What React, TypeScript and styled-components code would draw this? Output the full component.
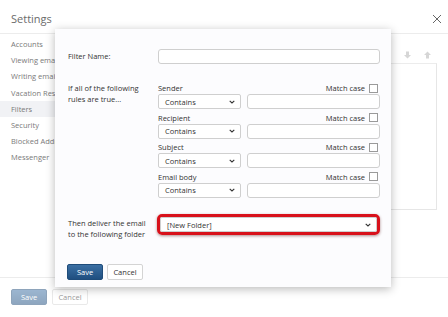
import React from 'react'
import styled, { createGlobalStyle } from 'styled-components'

const GlobalStyle = createGlobalStyle`
  html, body {
    margin: 0;
    padding: 0;
    background: #ffffff;
    font-family: "Open Sans", "Noto Sans", Arial, sans-serif;
  }
  #root {
    width: 448px;
    height: 317px;
    overflow: hidden;
  }
`

const Page = styled.div`
  position: relative;
  width: 448px;
  height: 317px;
  display: flex;
  flex-direction: column;
  background: #ffffff;
`

const Header = styled.div`
  height: 34px;
  box-sizing: border-box;
  display: flex;
  align-items: center;
  justify-content: space-between;
  padding: 4px 6px 0 11px;
  border-bottom: 1px solid #ececec;
`

const Title = styled.div`
  font-size: 11px;
  color: #6b6b6b;
`

const Body = styled.div`
  flex: 1;
  display: flex;
`

const Nav = styled.div`
  width: 90px;
  padding-top: 2px;
  display: flex;
  flex-direction: column;
`

const NavItem = styled.div<{ $active?: boolean }>`
  height: 16.2px;
  display: flex;
  align-items: center;
  padding-left: 11px;
  font-size: 7.5px;
  color: #7a7a7a;
  white-space: nowrap;
  background: ${({ $active }) => ($active ? '#f1f2f5' : 'transparent')};
`

const Pane = styled.div`
  flex: 1;
  display: flex;
  flex-direction: column;
  padding: 12px 11px 0 10px;
`

const ArrowRow = styled.div`
  height: 17px;
  display: flex;
  justify-content: flex-end;
  align-items: center;
  gap: 13px;
  padding-right: 6px;
`

const ListBox = styled.div`
  height: 145px;
  border: 1px solid #e6e6e6;
  border-top-color: #ececec;
`

const Footer = styled.div`
  height: 40px;
  box-sizing: border-box;
  border-top: 1px solid #ececec;
  display: flex;
  align-items: flex-start;
  gap: 5px;
  padding: 11px 0 0 11px;
`

const Button = styled.div<{ $primary?: boolean; $faded?: boolean }>`
  width: 36px;
  height: 16px;
  box-sizing: border-box;
  display: flex;
  align-items: center;
  justify-content: center;
  font-size: 7.5px;
  border-radius: 2px;
  border: 1px solid ${({ $primary }) => ($primary ? '#1f4c7a' : '#d4d4d4')};
  color: ${({ $primary }) => ($primary ? '#ffffff' : '#333333')};
  background: ${({ $primary }) =>
    $primary ? 'linear-gradient(#3b6fa3, #1f4f80)' : '#ffffff'};
  opacity: ${({ $faded }) => ($faded ? 0.5 : 1)};
`

const Modal = styled.div`
  position: absolute;
  left: 55px;
  top: 29px;
  width: 336px;
  height: 258px;
  box-sizing: border-box;
  background: #fcfcfe;
  box-shadow: 0 2px 9px rgba(0, 0, 0, 0.28);
  padding: 20px 11px 0 13px;
  display: grid;
  grid-template-columns: 90px 1fr;
  align-content: start;
  align-items: start;
  color: #333333;
`

const Label = styled.div<{ $top?: number }>`
  margin-top: ${({ $top }) => $top ?? 0}px;
  font-size: 7.5px;
  line-height: 10.5px;
`

const Field = styled.div<{ $top?: number }>`
  margin-top: ${({ $top }) => $top ?? 0}px;
  display: flex;
  flex-direction: column;
`

const TextInput = styled.div<{ $grow?: boolean }>`
  height: 15px;
  box-sizing: border-box;
  border: 1px solid #cfcfcf;
  border-radius: 3px;
  background: #ffffff;
  flex: ${({ $grow }) => ($grow ? 1 : 'none')};
`

const RuleHead = styled.div`
  height: 12px;
  display: flex;
  align-items: center;
  justify-content: space-between;
  font-size: 7.5px;
`

const MatchCase = styled.div`
  display: flex;
  align-items: center;
  gap: 4px;
  padding-right: 2px;
`

const CheckBox = styled.div`
  width: 7px;
  height: 7px;
  border: 1px solid #9a9a9a;
  background: #ffffff;
`

const RuleRow = styled.div`
  display: flex;
  gap: 6px;
  margin-bottom: 2.5px;
`

const Select = styled.div<{ $width?: number }>`
  width: ${({ $width }) => ($width ? `${$width}px` : 'auto')};
  flex: ${({ $width }) => ($width ? 'none' : 1)};
  height: 15px;
  box-sizing: border-box;
  border: 1px solid #cfcfcf;
  border-radius: 2px;
  background: #ffffff;
  display: flex;
  align-items: center;
  justify-content: space-between;
  padding: 0 5px 0 6px;
  font-size: 7.5px;
`

const Highlight = styled.div`
  border: 3px solid #d8111b;
  border-radius: 5px;
  box-shadow: 0 1px 3px rgba(80, 0, 0, 0.45);
  margin-left: -1px;
`

const Actions = styled.div`
  grid-column: 1 / span 2;
  display: flex;
  gap: 4px;
  margin-top: 25px;
  margin-left: -1px;
`

function Chevron() {
  return (
    <svg width="6" height="4" viewBox="0 0 6 4">
      <path d="M0.7 0.8 L3 3 L5.3 0.8" fill="none" stroke="#333" strokeWidth="1.1" />
    </svg>
  )
}

function Arrow({ up }: { up?: boolean }) {
  return (
    <svg width="7" height="8" viewBox="0 0 7 8">
      <path
        d={up ? 'M3.5 0.5 L7 4 L5 4 L5 7.5 L2 7.5 L2 4 L0 4 Z' : 'M3.5 7.5 L7 4 L5 4 L5 0.5 L2 0.5 L2 4 L0 4 Z'}
        fill="#d6d6d6"
      />
    </svg>
  )
}

const rules = ['Sender', 'Recipient', 'Subject', 'Email body']
const navItems = [
  'Accounts',
  'Viewing email',
  'Writing email',
  'Vacation Response',
  'Filters',
  'Security',
  'Blocked Addresses',
  'Messenger',
]

export default function App() {
  return (
    <>
      <GlobalStyle />
      <Page>
        <Header>
          <Title>Settings</Title>
          <svg width="10" height="10" viewBox="0 0 10 10">
            <path d="M1 1 L9 9 M9 1 L1 9" stroke="#666" strokeWidth="1" />
          </svg>
        </Header>
        <Body>
          <Nav>
            {navItems.map((item) => (
              <NavItem key={item} $active={item === 'Filters'}>
                {item}
              </NavItem>
            ))}
          </Nav>
          <Pane>
            <ArrowRow>
              <Arrow />
              <Arrow up />
            </ArrowRow>
            <ListBox />
          </Pane>
        </Body>
        <Footer>
          <Button $primary $faded>
            Save
          </Button>
          <Button $faded>Cancel</Button>
        </Footer>

        <Modal>
          <Label $top={2}>Filter Name:</Label>
          <Field>
            <TextInput />
          </Field>

          <Label $top={19}>
            If all of the following
            <br />
            rules are true...
          </Label>
          <Field $top={18}>
            {rules.map((rule) => (
              <React.Fragment key={rule}>
                <RuleHead>
                  <span>{rule}</span>
                  <MatchCase>
                    Match case
                    <CheckBox />
                  </MatchCase>
                </RuleHead>
                <RuleRow>
                  <Select $width={83}>
                    Contains
                    <Chevron />
                  </Select>
                  <TextInput $grow />
                </RuleRow>
              </React.Fragment>
            ))}
          </Field>

          <Label $top={18}>
            Then deliver the email
            <br />
            to the following folder
          </Label>
          <Field $top={14}>
            <Highlight>
              <Select>
                [New Folder]
                <Chevron />
              </Select>
            </Highlight>
          </Field>

          <Actions>
            <Button $primary>Save</Button>
            <Button>Cancel</Button>
          </Actions>
        </Modal>
      </Page>
    </>
  )
}
